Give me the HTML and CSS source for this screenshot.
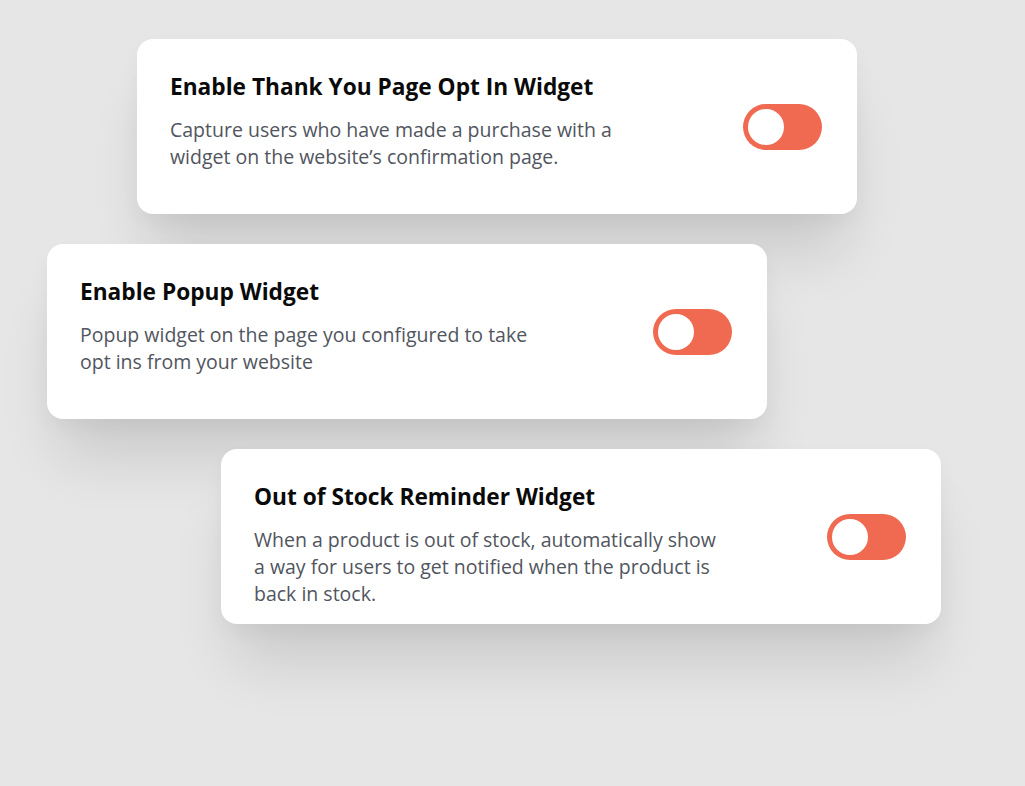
FILE: index.html
```html
<!DOCTYPE html>
<html lang="en">
<head>
<meta charset="utf-8">
<title>Widgets</title>
<link rel="stylesheet" href="styles.css">
</head>
<body>
<main class="stack">
  <section class="card card-a">
    <div class="text">
      <h2 class="title">Enable Thank You Page Opt In Widget</h2>
      <p class="desc">Capture users who have made a purchase with a widget on the website’s confirmation page.</p>
    </div>
    <span class="toggle"><span class="knob"></span></span>
  </section>
  <section class="card card-b">
    <div class="text">
      <h2 class="title">Enable Popup Widget</h2>
      <p class="desc">Popup widget on the page you configured to take opt ins from your website</p>
    </div>
    <span class="toggle"><span class="knob"></span></span>
  </section>
  <section class="card card-c">
    <div class="text">
      <h2 class="title">Out of Stock Reminder Widget</h2>
      <p class="desc">When a product is out of stock, automatically show a way for users to get notified when the product is back in stock.</p>
    </div>
    <span class="toggle"><span class="knob"></span></span>
  </section>
</main>
</body>
</html>
```
FILE: styles.css
```css
html, body {
  margin: 0;
  padding: 0;
}
body {
  width: 1025px;
  height: 786px;
  overflow: hidden;
  background: #e6e6e6;
  font-family: "Open Sans", "Noto Sans", sans-serif;
}
.stack {
  display: flex;
  flex-direction: column;
  gap: 30px;
  padding-top: 39px;
}
.card {
  box-sizing: border-box;
  width: 720px;
  height: 175px;
  background: #ffffff;
  border-radius: 16px;
  display: flex;
  align-items: flex-start;
  justify-content: space-between;
  padding: 33px 35px 0 33px;
  box-shadow: 0 50px 60px -12px rgba(0, 0, 0, 0.12), 0 8px 20px rgba(0, 0, 0, 0.04);
}
.card-a { margin-left: 137px; }
.card-b { margin-left: 47px; }
.card-c { margin-left: 221px; }
.text {
  max-width: 470px;
}
.title {
  margin: 0 0 14px;
  font-size: 22.7px;
  line-height: 30px;
  font-weight: 700;
  color: #0a0a0a;
}
.desc {
  margin: 0;
  font-size: 19.5px;
  line-height: 27px;
  color: #51555e;
}
.toggle {
  box-sizing: border-box;
  align-self: center;
  margin-top: -33px;
  width: 79px;
  height: 46px;
  border-radius: 23px;
  background: #f06a51;
  padding: 5px;
  display: flex;
  align-items: center;
  flex-shrink: 0;
}
.knob {
  width: 36px;
  height: 36px;
  border-radius: 50%;
  background: #ffffff;
}
```
